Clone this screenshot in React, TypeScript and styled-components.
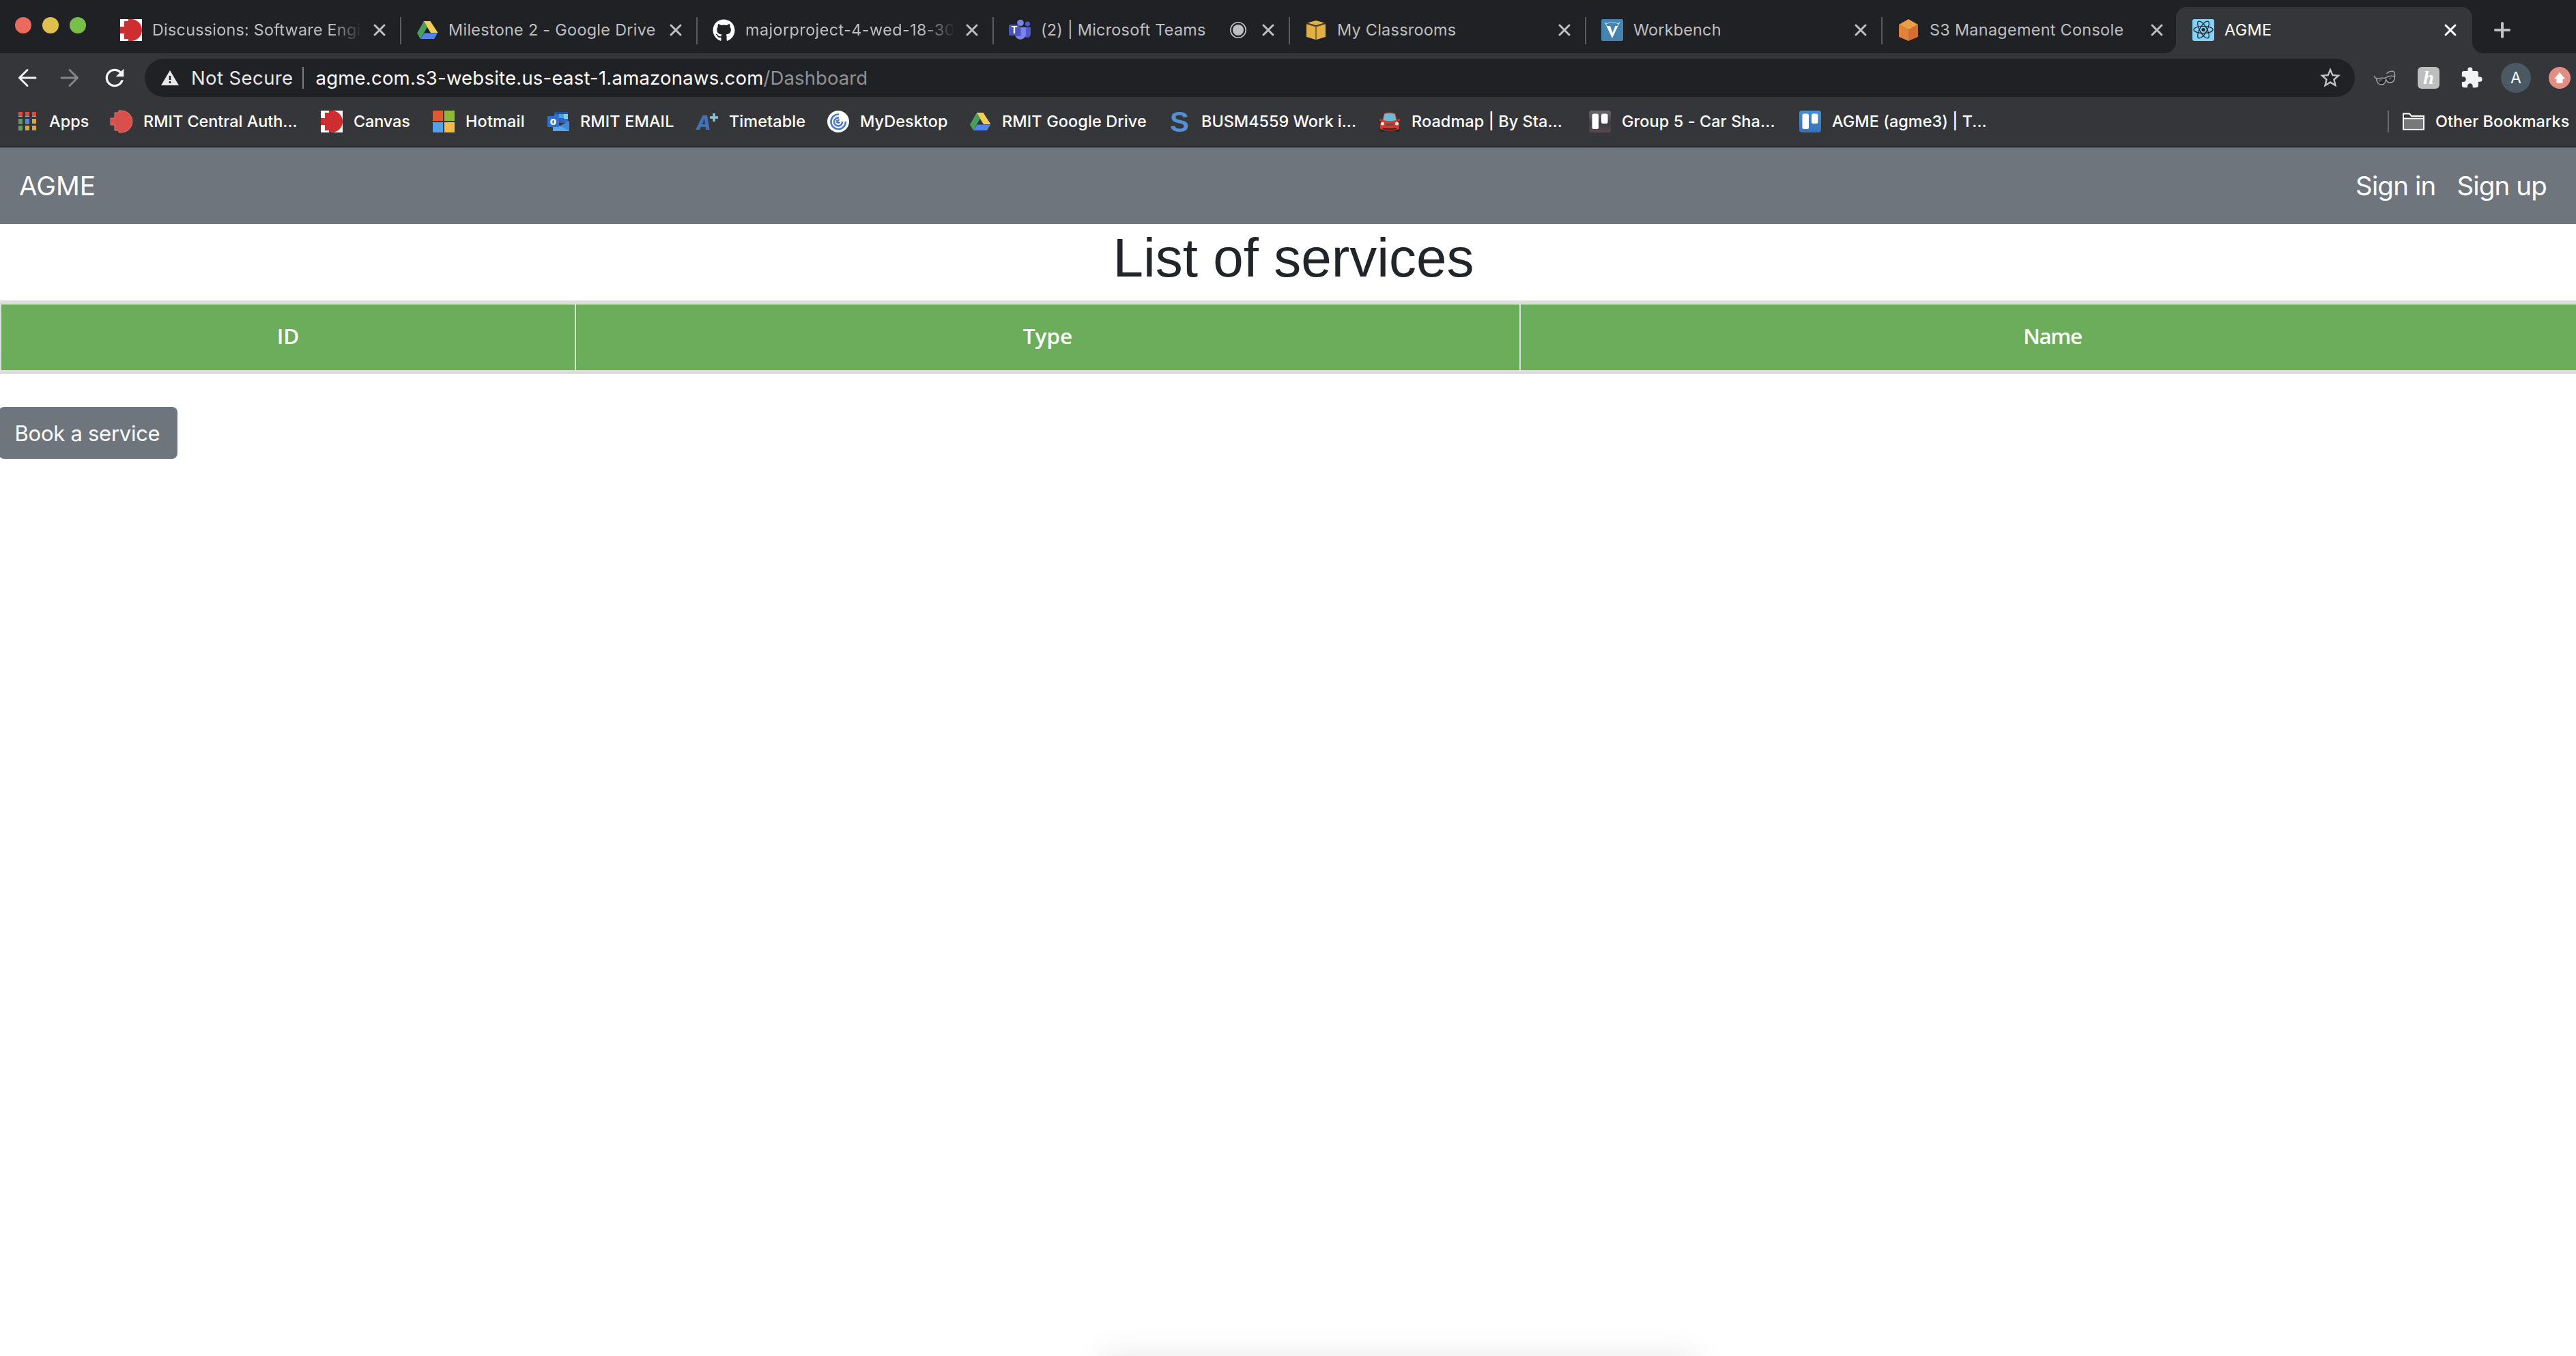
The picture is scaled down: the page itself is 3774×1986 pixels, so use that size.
import React from "react";
import styled, { createGlobalStyle } from "styled-components";
import { FaGithub } from "react-icons/fa";
import { MdExtension, MdRefresh, MdStarBorder } from "react-icons/md";

const sans = `Inter, Roboto, "Liberation Sans", sans-serif`;

const GlobalStyle = createGlobalStyle`
  * { box-sizing: border-box; }
  body { margin: 0; background: #fff; font-family: ${sans}; }
  svg { display: block; flex: none; overflow: visible; }
`;

const Window = styled.div`
  position: relative;
  width: 100%;
  height: 100vh;
  overflow: hidden;
  display: flex;
  flex-direction: column;
`;

/* ---------- tab strip ---------- */

const TabStrip = styled.div`
  display: flex;
  height: 78px;
  padding-top: 10px;
  flex: none;
  background: #202124;
`;

const Lights = styled.div`
  display: flex;
  gap: 16px;
  width: 154px;
  padding: 15px 0 0 22px;
  flex: none;
`;

const Light = styled.span<{ $color: string }>`
  width: 24px;
  height: 24px;
  border-radius: 50%;
  background: ${(p) => p.$color};
`;

const TabBox = styled.div<{ $active?: boolean; $divider?: boolean }>`
  position: relative;
  display: flex;
  align-items: center;
  width: 434px;
  height: 68px;
  margin-left: ${(p) => (p.$active ? "-4px" : "0")};
  padding: 0 23px 0 ${(p) => (p.$active ? 24 : 22)}px;
  flex: none;
  color: ${(p) => (p.$active ? "#fff" : "#bdbfc2")};
  background: ${(p) => (p.$active ? "#35363a" : "transparent")};
  border-radius: 16px 16px 0 0;

  ${(p) =>
    p.$divider &&
    `&::after {
      content: "";
      position: absolute;
      right: 0;
      top: 15px;
      width: 2px;
      height: 40px;
      background: #5b5c5f;
    }`}

  ${(p) =>
    p.$active &&
    `&::before, &::after {
      content: "";
      position: absolute;
      bottom: 0;
      width: 16px;
      height: 16px;
    }
    &::before {
      left: -16px;
      background: radial-gradient(circle at 0 0, transparent 15.5px, #35363a 16px);
    }
    &::after {
      right: -16px;
      background: radial-gradient(circle at 100% 0, transparent 15.5px, #35363a 16px);
    }`}
`;

const TabTitle = styled.span<{ $ls: number; $fade?: boolean }>`
  flex: 1;
  min-width: 0;
  margin-left: 15px;
  overflow: hidden;
  white-space: nowrap;
  font-size: 23.4px;
  line-height: 34px;
  letter-spacing: ${(p) => p.$ls}px;
  ${(p) =>
    p.$fade && `mask-image: linear-gradient(to right, #000 calc(100% - 48px), transparent 100%);`}
`;

const TabEnd = styled.span`
  display: flex;
  align-items: center;
  gap: 23px;
  margin-left: 16px;
  flex: none;
`;

const NewTab = styled.div`
  display: flex;
  align-items: center;
  margin-left: 32px;
  height: 68px;
`;

/* ---------- toolbar ---------- */

const Toolbar = styled.div`
  display: flex;
  align-items: center;
  height: 72px;
  flex: none;
  background: #35363a;
`;

const NavButtons = styled.div`
  display: flex;
  align-items: center;
  width: 212px;
  padding-left: 24px;
  gap: 30px;
  flex: none;
`;

const Omnibox = styled.div`
  display: flex;
  align-items: center;
  width: 3238px;
  height: 56px;
  padding: 0 18px 0 24px;
  flex: none;
  border-radius: 28px;
  background: #202124;
  font-size: 27.5px;
  white-space: nowrap;
`;

const NotSecure = styled.span`
  margin-left: 18px;
  letter-spacing: 0.4px;
  color: #e8e8e9;
`;

const OmniDivider = styled.span`
  width: 2px;
  height: 32px;
  margin: 0 18px 0 13px;
  background: #7c7d80;
`;

const Host = styled.span`
  color: #fff;
  letter-spacing: 0.22px;
`;

const UrlPath = styled.span`
  flex: 1;
  color: #8f9194;
  letter-spacing: 0.1px;
`;

const Extensions = styled.div`
  display: flex;
  align-items: center;
  padding-left: 27px;
`;

const HoneyBadge = styled.span`
  display: flex;
  align-items: center;
  justify-content: center;
  width: 32px;
  height: 32px;
  margin: 0 30px 0 31px;
  border-radius: 6px;
  background: #bebebe;
  color: #fff;
  font: italic 700 28px/30px "Liberation Serif", serif;
`;

const Avatar = styled.span`
  display: flex;
  align-items: center;
  justify-content: center;
  width: 44px;
  height: 44px;
  margin: 0 26px;
  border-radius: 50%;
  background: #4a5963;
  color: #fff;
  font-size: 23px;
`;

/* ---------- bookmarks ---------- */

const Bookmarks = styled.div`
  display: flex;
  align-items: center;
  height: 66px;
  padding: 0 0 8px 24px;
  flex: none;
  background: #35363a;
  border-bottom: 2px solid #28292b;
  color: #fff;
`;

const BookmarkItem = styled.div<{ $w: number }>`
  display: flex;
  align-items: center;
  gap: 16px;
  width: ${(p) => p.$w}px;
  flex: none;
`;

const BookmarkLabel = styled.span<{ $ls: number }>`
  font-size: 23.4px;
  line-height: 32px;
  font-weight: 500;
  white-space: nowrap;
  letter-spacing: ${(p) => p.$ls}px;
`;

const BookmarkDivider = styled.span`
  width: 2px;
  height: 32px;
  margin: 0 20px 0 auto;
  background: #6b6c6f;
`;

/* ---------- page ---------- */

const Page = styled.main`
  flex: 1;
  width: 3790px;
  background: #fff;
`;

const Navbar = styled.nav`
  display: flex;
  align-items: center;
  justify-content: space-between;
  width: 3774px;
  height: 112px;
  padding: 0 43px 0 28px;
  background: #6e757c;
  color: #fff;
  font-size: 38.5px;
`;

const NavLinks = styled.div`
  display: flex;
  gap: 31px;
`;

const NavLink = styled.span`
  letter-spacing: -0.85px;
`;

const Title = styled.h1`
  margin: 0 0 14px;
  padding-top: 2px;
  font: 400 80px/96px "Liberation Sans", Arial, sans-serif;
  text-align: center;
  color: #212529;
`;

const ServiceTable = styled.div`
  display: grid;
  grid-template-columns: 842px 1384px 1560px;
  height: 108px;
  border: 0 solid #ddd;
  border-width: 6px 2px;
  background: #6cad5b;
`;

const HeaderCell = styled.div<{ $ls?: number }>`
  display: flex;
  align-items: center;
  justify-content: center;
  padding-bottom: 4px;
  color: #fff;
  font: 600 31.5px/48px "Open Sans", "Noto Sans", sans-serif;
  letter-spacing: ${(p) => p.$ls ?? 0}px;
  border-right: 2px solid #ddd;
`;

const BookButton = styled.button`
  display: flex;
  align-items: center;
  justify-content: center;
  width: 262px;
  height: 76px;
  margin: 48px 0 0 -2px;
  padding: 1px 2px 0 0;
  border: 0;
  border-radius: 8px;
  background: #6e757c;
  color: #fff;
  font: 400 31px/48px ${sans};
  letter-spacing: -0.27px;
`;

const BottomShadow = styled.div`
  position: absolute;
  left: 1612px;
  top: 100%;
  width: 876px;
  height: 60px;
  box-shadow: 0 0 48px rgba(0, 0, 0, 0.09);
`;

/* ---------- drawings ---------- */

const Rmit = ({ tile = true }: { tile?: boolean }) => (
  <svg width="32" height="32" viewBox="0 0 32 32">
    {tile && <rect width="32" height="32" fill="#fff" />}
    <path
      d="M12 0H16A16 16 0 0 1 16 32H12V29H6V21H0V11H6V3H12Z"
      fill={tile ? "#cf2e31" : "#d9504a"}
      stroke={tile ? "none" : "#e07d79"}
      strokeWidth="1"
    />
  </svg>
);

const Drive = () => (
  <svg width="32" height="32" viewBox="0 0 32 32">
    <path d="M10.500 3h10l11 17H21z" fill="#f5ce55" />
    <path d="M11 3l5 8.500L6 29 1 20.500z" fill="#4a9e5c" />
    <path d="M11.500 20.500H31L26 29H6z" fill="#5383ec" />
  </svg>
);

const Github = () => <FaGithub size={33} color="#fff" />;

const Teams = () => (
  <svg width="32" height="32" viewBox="0 0 32 32">
    <circle cx="27.500" cy="7" r="3.500" fill="#5059c9" />
    <path d="M24 12h8v10a5 5 0 0 1-8 4z" fill="#5059c9" />
    <circle cx="17" cy="5.500" r="4.800" fill="#7b83eb" />
    <path d="M10 12h15v10.500a8 8 0 0 1-15.500 2z" fill="#7b83eb" />
    <path d="M12 12h6v13h-8z" fill="#5a62c3" />
    <rect x="0" y="8" width="16" height="16" rx="1.500" fill="#4b53bc" />
    <text x="8" y="21" fontSize="14" fontWeight="700" textAnchor="middle" fill="#fff">
      T
    </text>
  </svg>
);

const YellowCube = () => (
  <svg width="32" height="32" viewBox="0 0 32 32">
    <path d="M16 2l12.500 3.500L16 9 3.500 5.500z" fill="#e6b040" />
    <path d="M2 7l13 4v19L2 26zM30 7l-13 4v19l13-4z" fill="#e0b044" />
    <path d="M16 11v19" stroke="#8c6d2b" strokeWidth="2" />
    <path d="M2 6.500l14 4 14-4" stroke="#5a4720" strokeWidth="1.500" fill="none" />
  </svg>
);

const Vocareum = () => (
  <svg width="32" height="32" viewBox="0 0 32 32">
    <rect width="32" height="32" rx="2" fill="#4384b0" />
    <path d="M7.500 10h5.500l3.500 10 4-10h4L16 28z" fill="#fff" />
    <path d="M5 4l3 6M27 4l-3 6M6 7q10-4 20 0" stroke="#b5d6ea" strokeWidth="1.200" fill="none" />
  </svg>
);

const OrangeCube = () => (
  <svg width="32" height="32" viewBox="0 0 32 32">
    <path d="M16 0l14 8-14 8L2 8z" fill="#eb9e44" />
    <path d="M2 8l14 8v16L2 26z" fill="#e1823a" />
    <path d="M30 8l-14 8v16l14-6z" fill="#d86a33" />
  </svg>
);

const ReactLogo = () => (
  <svg width="32" height="32" viewBox="0 0 32 32">
    <rect width="32" height="32" rx="3" fill="#83d3f8" />
    <g fill="none" stroke="#23272b" strokeWidth="1.300">
      <ellipse cx="16" cy="15.500" rx="14" ry="5.200" />
      <ellipse cx="16" cy="15.500" rx="14" ry="5.200" transform="rotate(60 16 15.500)" />
      <ellipse cx="16" cy="15.500" rx="14" ry="5.200" transform="rotate(120 16 15.500)" />
    </g>
    <circle cx="16" cy="15.500" r="2.600" fill="#23272b" />
  </svg>
);

const Close = () => (
  <svg width="18" height="18" viewBox="0 0 18 18">
    <path d="M2 2l14 14M16 2L2 16" stroke="currentColor" strokeWidth="3" strokeLinecap="round" />
  </svg>
);

const Recording = () => (
  <svg width="24" height="24" viewBox="0 0 24 24">
    <circle cx="12" cy="12" r="11.200" fill="none" stroke="#bdbfc2" strokeWidth="1.600" />
    <circle cx="12" cy="12" r="8" fill="#bdbfc2" />
  </svg>
);

const Plus = () => (
  <svg width="24" height="24" viewBox="0 0 24 24">
    <path d="M12 2v20M2 12h20" stroke="#bdbfc2" strokeWidth="4" strokeLinecap="round" />
  </svg>
);

const Arrow = ({ flip, color }: { flip?: boolean; color: string }) => (
  <svg width="32" height="32" viewBox="0 0 32 32">
    <path
      d="M28 16H5M16 4.500L4.500 16 16 27.500"
      transform={flip ? "rotate(180 16 16)" : undefined}
      fill="none"
      stroke={color}
      strokeWidth="3"
      strokeLinecap="round"
      strokeLinejoin="round"
    />
  </svg>
);

const Warning = () => (
  <svg width="26" height="22" viewBox="0 0 26 22">
    <path d="M13 0l13 22H0z" fill="#e8e8e9" />
    <path d="M13 8v6M13 16v3" stroke="#202124" strokeWidth="2.600" />
  </svg>
);

const Glasses = () => (
  <svg width="34" height="30" viewBox="0 0 34 30">
    <path d="M1.500 12q.5 3 4 5M31 15q2-6-1.500-9.500-4-1-8 1.500l-2 2" fill="none" stroke="#a3a3a3" strokeWidth="1.500" />
    <path
      d="M4.500 17q6-2.500 12-1.500l1.500-.5q6-4 13-2 .5 5-2 7.500-4 2.500-8 .5-1.500-1-2.500-4-1 6-4 7.500-4 1-7-1-2-2-3-6.500z"
      fill="#252526"
      stroke="#a3a3a3"
      strokeWidth="1.500"
      strokeLinejoin="round"
    />
    <path d="M7 18q4-1.500 7-1l-5 4.500zM22 15.500q3-1.500 6-1l-4 4z" fill="#5c5c5c" />
  </svg>
);

const UpBadge = () => (
  <svg width="32" height="32" viewBox="0 0 32 32">
    <circle cx="16" cy="16" r="16" fill="#e28e85" />
    <path d="M16 8l8 9.500h-3.500V24h-9v-6.500H8z" fill="#fff" />
  </svg>
);

const appColors = ["#dd4b3e", "#dd4b3e", "#dd4b3e", "#58a05c", "#4d86ec", "#e2a33a", "#58a05c", "#e2a33a", "#e2a33a"];

const AppsGrid = () => (
  <svg width="32" height="32" viewBox="0 0 32 32">
    {appColors.map((c, i) => {
      const x = 3 + (i % 3) * 10;
      const y = 2 + Math.floor(i / 3) * 10;
      return (
        <g key={i}>
          <rect x={x} y={y} width="6" height="7" fill="#a9a59f" />
          <rect x={x} y={y} width="6" height="6" fill={c} />
        </g>
      );
    })}
  </svg>
);

const Microsoft = () => (
  <svg width="32" height="32" viewBox="0 0 32 32">
    <rect width="15" height="15" fill="#dd5b32" />
    <rect x="17" width="15" height="15" fill="#8fb935" />
    <rect y="17" width="15" height="15" fill="#52a1ea" />
    <rect x="17" y="17" width="15" height="15" fill="#f1ba42" />
  </svg>
);

const Outlook = () => (
  <svg width="32" height="32" viewBox="0 0 32 32">
    <rect x="10" y="2" width="20" height="16" fill="#2f6fc4" />
    <rect x="10" y="2" width="20" height="3" fill="#21519b" />
    <path d="M17 5h7v6h-7z" fill="#4a9fe6" />
    <path d="M24 5h6v7h-6z" fill="#7ccbf8" />
    <path d="M17 11h7v7h-7z" fill="#2d63b5" />
    <path d="M8 17l12 6 12-8v15H8z" fill="#59a7e8" />
    <path d="M32 15v15L19 22z" fill="#4088d8" />
    <rect x="0" y="8" width="17" height="16" rx="1" fill="#2f6fcd" />
    <text x="8.300" y="21" fontSize="15" fontWeight="800" textAnchor="middle" fill="#fff">
      o
    </text>
  </svg>
);

const APlus = () => (
  <svg width="32" height="32" viewBox="0 0 32 32">
    <text x="0" y="28" fontSize="28" fontWeight="800" fontStyle="italic" fill="#3f74b8">
      A
    </text>
    <path d="M26 4v12M20 10h12" stroke="#8cc4d6" strokeWidth="3.500" />
  </svg>
);

const Swirl = () => (
  <svg width="32" height="32" viewBox="0 0 32 32">
    <circle cx="16" cy="16" r="16" fill="#fff" />
    <g fill="none" stroke="#4a7cc9" strokeWidth="2.600">
      <path d="M17 5.500A10.800 10.800 0 1 0 27 16" />
      <path d="M17 10.500A6 6 0 1 0 22 16" />
      <path d="M17.500 14.500a2 2 0 1 0 .5 2" />
    </g>
  </svg>
);

const BlueS = () => (
  <svg width="32" height="32" viewBox="0 0 32 32">
    <text x="16" y="31" fontSize="42" fontWeight="700" textAnchor="middle" fill="#5690d2" fontFamily="Liberation Sans">
      S
    </text>
  </svg>
);

const Car = () => (
  <svg width="32" height="32" viewBox="0 0 32 32">
    <path d="M1 25h7v6H2zM24 25h7l-1 6h-6z" fill="#2a2526" />
    <path d="M8 4q8-3 16 0l3 11 3 4v8q-14 4-28 0v-8l3-4z" fill="#d63c28" />
    <path d="M8.500 5q7.500-2 15 0l2 9q-9 2.500-19 0z" fill="#6fb9d1" />
    <path d="M1 12l4 1-1 3-3-1zM31 12l-4 1 1 3 3-1z" fill="#c93625" />
    <circle cx="5.500" cy="19" r="2.500" fill="#fbe9e4" />
    <circle cx="26.500" cy="19" r="2.500" fill="#fbe9e4" />
    <rect x="10" y="18.500" width="12" height="3.500" rx="1" fill="#55565c" />
    <path d="M6 26q10 2 20 0" stroke="#5d1a12" strokeWidth="2" fill="none" />
  </svg>
);

const Board = ({ photo }: { photo?: boolean }) => (
  <svg width="32" height="32" viewBox="0 0 32 32">
    <defs>
      <linearGradient id={photo ? "boardPhoto" : "boardBlue"} x1="0" y1="0" x2="0" y2="1">
        <stop offset="0" stopColor={photo ? "#6d6670" : "#4a90d0"} />
        <stop offset=".6" stopColor={photo ? "#3e3b44" : "#3b7cc3"} />
        <stop offset="1" stopColor={photo ? "#5c4a4c" : "#3474bc"} />
      </linearGradient>
    </defs>
    <rect width="32" height="32" rx="4" fill={`url(#${photo ? "boardPhoto" : "boardBlue"})`} />
    <rect x="4.500" y="4.500" width="9.500" height="22.500" rx="2.500" fill="#fff" />
    <rect x="18" y="4.500" width="9.500" height="14.500" rx="2.500" fill="#fff" />
  </svg>
);

const Folder = () => (
  <svg width="32" height="26" viewBox="0 0 32 26">
    <path d="M1 24.500V1.500h9l3 3.500h18v19.500z" fill="#35363a" stroke="#fff" strokeWidth="2" />
    <rect x="2" y="9" width="28" height="14.500" fill="#77787a" />
    <path d="M1 8.500h30" stroke="#fff" strokeWidth="1.800" />
  </svg>
);

/* ---------- data ---------- */

type Tab = { title: string; icon: React.ReactNode; ls: number; fade?: boolean; recording?: boolean; active?: boolean };

const tabs: Tab[] = [
  { title: "Discussions: Software Engi", icon: <Rmit />, ls: 0.22, fade: true },
  { title: "Milestone 2 - Google Drive", icon: <Drive />, ls: 0.3 },
  { title: "majorproject-4-wed-18-30", icon: <Github />, ls: 0.42, fade: true },
  { title: "(2) | Microsoft Teams", icon: <Teams />, ls: 0.25, recording: true },
  { title: "My Classrooms", icon: <YellowCube />, ls: 0.28 },
  { title: "Workbench", icon: <Vocareum />, ls: 0.2 },
  { title: "S3 Management Console", icon: <OrangeCube />, ls: 0.3 },
  { title: "AGME", icon: <ReactLogo />, ls: 0.4, active: true },
];

const bookmarks: { label: string; icon: React.ReactNode; w: number; ls: number }[] = [
  { label: "Apps", icon: <AppsGrid />, w: 138, ls: 0.1 },
  { label: "RMIT Central Auth...", icon: <Rmit tile={false} />, w: 308, ls: 0 },
  { label: "Canvas", icon: <Rmit />, w: 164, ls: -0.1 },
  { label: "Hotmail", icon: <Microsoft />, w: 168, ls: 0.2 },
  { label: "RMIT EMAIL", icon: <Outlook />, w: 218, ls: 0.15 },
  { label: "Timetable", icon: <APlus />, w: 192, ls: 0.1 },
  { label: "MyDesktop", icon: <Swirl />, w: 208, ls: 0.1 },
  { label: "RMIT Google Drive", icon: <Drive />, w: 292, ls: 0.15 },
  { label: "BUSM4559 Work i...", icon: <BlueS />, w: 308, ls: 0.02 },
  { label: "Roadmap | By Sta...", icon: <Car />, w: 308, ls: 0.12 },
  { label: "Group 5 - Car Sha...", icon: <Board photo />, w: 308, ls: 0.12 },
  { label: "AGME (agme3) | T...", icon: <Board />, w: 300, ls: 0.07 },
];

export default function App() {
  return (
    <Window>
      <GlobalStyle />
      <TabStrip>
        <Lights>
          <Light $color="#ea6a5e" />
          <Light $color="#dfc04f" />
          <Light $color="#77c148" />
        </Lights>
        {tabs.map((t, i) => (
          <TabBox key={t.title} $active={t.active} $divider={i < 6}>
            {t.icon}
            <TabTitle $ls={t.ls} $fade={t.fade}>
              {t.title}
            </TabTitle>
            <TabEnd>
              {t.recording && <Recording />}
              <Close />
            </TabEnd>
          </TabBox>
        ))}
        <NewTab>
          <Plus />
        </NewTab>
      </TabStrip>

      <Toolbar>
        <NavButtons>
          <Arrow color="#f1f2f4" />
          <Arrow flip color="#85868a" />
          <MdRefresh size={40} color="#f1f2f4" />
        </NavButtons>
        <Omnibox>
          <Warning />
          <NotSecure>Not Secure</NotSecure>
          <OmniDivider />
          <Host>agme.com.s3-website.us-east-1.amazonaws.com</Host>
          <UrlPath>/Dashboard</UrlPath>
          <MdStarBorder size={36} color="#c0c2c5" />
        </Omnibox>
        <Extensions>
          <Glasses />
          <HoneyBadge>h</HoneyBadge>
          <MdExtension size={34} color="#f1f2f4" />
          <Avatar>A</Avatar>
          <UpBadge />
        </Extensions>
      </Toolbar>

      <Bookmarks>
        {bookmarks.map((b) => (
          <BookmarkItem key={b.label} $w={b.w}>
            {b.icon}
            <BookmarkLabel $ls={b.ls}>{b.label}</BookmarkLabel>
          </BookmarkItem>
        ))}
        <BookmarkDivider />
        <BookmarkItem $w={254}>
          <Folder />
          <BookmarkLabel $ls={0.1}>Other Bookmarks</BookmarkLabel>
        </BookmarkItem>
      </Bookmarks>

      <Page>
        <Navbar>
          <span>AGME</span>
          <NavLinks>
            <NavLink>Sign in</NavLink>
            <NavLink>Sign up</NavLink>
          </NavLinks>
        </Navbar>
        <Title>List of services</Title>
        <ServiceTable>
          <HeaderCell>ID</HeaderCell>
          <HeaderCell>Type</HeaderCell>
          <HeaderCell $ls={-1.4}>Name</HeaderCell>
        </ServiceTable>
        <BookButton>Book a service</BookButton>
      </Page>
      <BottomShadow />
    </Window>
  );
}
